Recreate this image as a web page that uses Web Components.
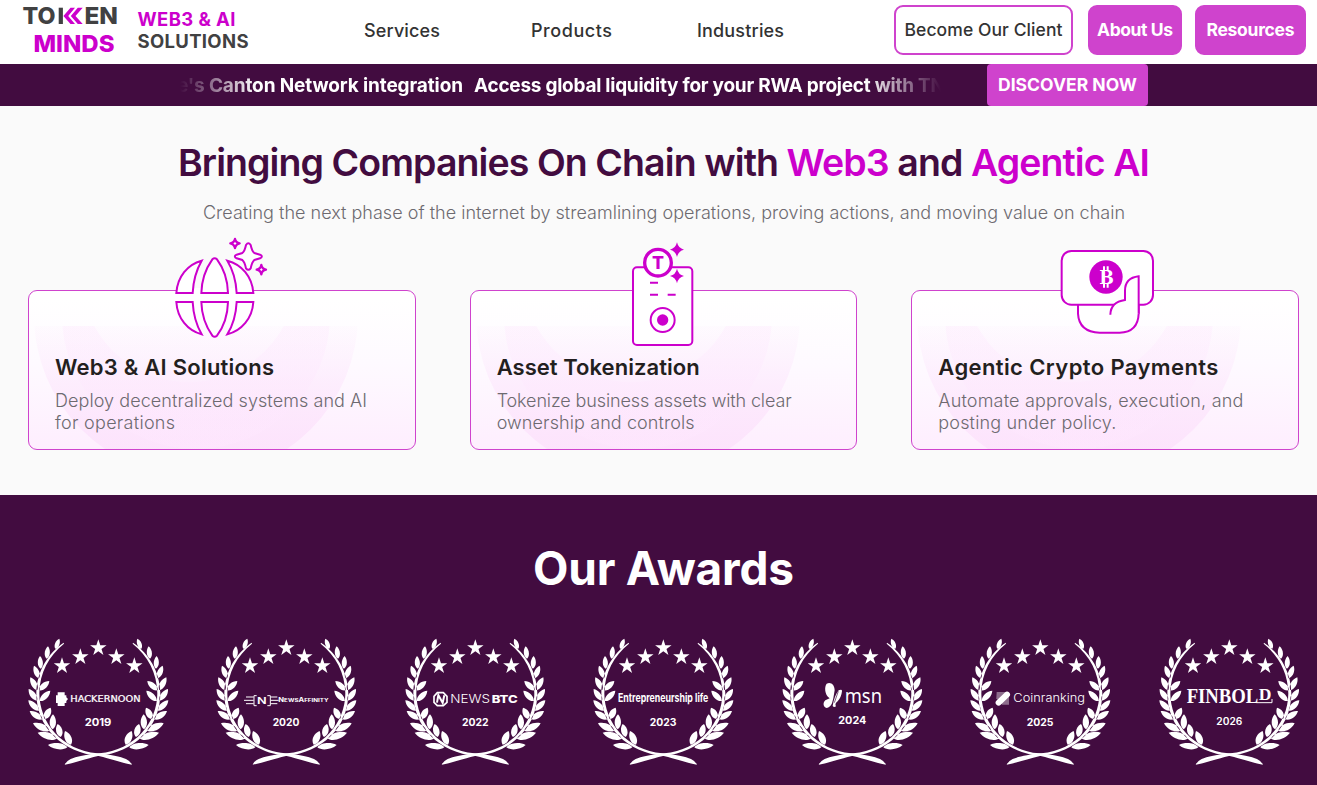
<!DOCTYPE html>
<html lang="en">
<head>
<meta charset="utf-8">
<title>TokenMinds</title>
<style>
   html, body{
      margin:0;
      padding:0;
   }
   body{
      font-family:Inter, "Liberation Sans", sans-serif;
      background:#fafafa;
      color:#231f20;
      width:1317px;
      overflow:hidden;
   }
</style>
</head>
<body>
<token-page></token-page>

<script>
'use strict'

/* Base class: clones the template of the element in its shadow root */
class BaseElement extends HTMLElement{
   constructor(){
      super();
      this.attachShadow({mode:'open'});
      const tpl = document.createElement('template');
      tpl.innerHTML = this.constructor.markup;
      this.shadowRoot.appendChild(tpl.content.cloneNode(true));
   }
}

/* One line of text, tracked so that it fills the given width */
customElements.define('fit-text', class FitText extends BaseElement{
   static markup = `
      <style>
         :host{ display:inline-block; white-space:nowrap; flex:none; }
      </style>
      <slot></slot>`;
   connectedCallback(){
      const width = parseFloat(this.getAttribute('width'));
      const count = this.textContent.length;
      const natural = this.getBoundingClientRect().width;
      if(!width || !natural || count < 2) return;
      const spacing = (width - natural) / (count - 1);
      this.style.letterSpacing = spacing + 'px';
      this.style.marginRight = -spacing + 'px';
   }
});

customElements.define('brand-logo', class BrandLogo extends BaseElement{
   static markup = `
      <style>
         :host{ display:block; }
         svg{ display:block; }
         text{ font-family:Inter, sans-serif; }
      </style>
      <svg width="260" height="64" viewBox="0 0 260 64">
         <g fill="#414142" font-weight="800" font-size="23">
            <text x="22.500" y="24" textLength="33" lengthAdjust="spacingAndGlyphs">TO</text>
            <rect x="58.700" y="7.700" width="4.200" height="16.300"/>
            <text x="84.500" y="24" textLength="33.500" lengthAdjust="spacingAndGlyphs">EN</text>
         </g>
         <g fill="#cc00cc">
            <path d="M70.500 7.700H75L68.200 15.900L75 24H70.500L63.400 15.900Z"/>
            <path d="M77.800 7.700H82.700L75.500 15.900L82.700 24H77.800L70.800 15.900Z"/>
            <text x="33.500" y="51.700" font-size="23.500" font-weight="800" textLength="81" lengthAdjust="spacingAndGlyphs">MINDS</text>
            <text x="137.500" y="26" font-size="18.500" font-weight="700" textLength="98">WEB3 &amp; AI</text>
         </g>
         <text x="137.500" y="48" fill="#414142" font-size="18.500" font-weight="700" textLength="111">SOLUTIONS</text>
      </svg>`;
});

customElements.define('nav-button', class NavButton extends BaseElement{
   static markup = `
      <style>
         :host{
            display:flex;
            align-items:center;
            justify-content:center;
            box-sizing:border-box;
            height:50px;
            padding-bottom:2px;
            border:2px solid #cf43cd;
            border-radius:9px;
            background:#cf43cd;
            color:#ffffff;
            font-size:17.500px;
            font-weight:700;
         }
         :host([outline]){
            background:#ffffff;
            color:#333333;
            font-weight:500;
         }
      </style>
      <slot></slot>`;
});

customElements.define('site-header', class SiteHeader extends BaseElement{
   static markup = `
      <style>
         :host{
            display:flex;
            align-items:center;
            height:64px;
            background:#ffffff;
            color:#333333;
         }
         nav{
            display:flex;
            gap:91px;
            margin:0 0 2px 104px;
            font-size:18px;
            font-weight:500;
            line-height:24px;
         }
         nav fit-text:nth-child(3){ margin-left:-6px; }
         .actions{
            display:flex;
            margin:0 11px 4px auto;
         }
      </style>
      <brand-logo></brand-logo>
      <nav>
         <fit-text width="76">Services</fit-text>
         <fit-text width="81">Products</fit-text>
         <fit-text width="87">Industries</fit-text>
      </nav>
      <div class="actions">
         <nav-button outline style="width:179px;margin-right:15px"><fit-text width="158">Become Our Client</fit-text></nav-button>
         <nav-button style="width:94px;margin-right:13px"><fit-text width="76">About Us</fit-text></nav-button>
         <nav-button style="width:111px"><fit-text width="88">Resources</fit-text></nav-button>
      </div>`;
});

customElements.define('news-ticker', class NewsTicker extends BaseElement{
   static markup = `
      <style>
         :host{
            display:flex;
            height:42px;
            background:#420c40;
            color:#ffffff;
            font-weight:650;
         }
         .track{
            display:flex;
            align-items:center;
            gap:11px;
            width:761px;
            margin-left:180px;
            overflow:hidden;
            font-size:19px;
            line-height:41px;
            padding-top:1px;
            box-sizing:border-box;
            -webkit-mask-image:linear-gradient(90deg, transparent, #000 10%, #000 90%, transparent);
            mask-image:linear-gradient(90deg, transparent, #000 10%, #000 90%, transparent);
         }
         .discover{
            display:flex;
            align-items:center;
            justify-content:center;
            box-sizing:border-box;
            width:161px;
            margin-left:46px;
            padding-bottom:1px;
            border-radius:4px;
            background:#cf43cd;
            font-size:17.500px;
            font-weight:700;
         }
      </style>
      <div class="track">
         <fit-text width="286" style="margin-left:-3px">e's Canton Network integration</fit-text>
         <fit-text width="471">Access global liquidity for your RWA project with TN</fit-text>
      </div>
      <div class="discover"><fit-text width="139">DISCOVER NOW</fit-text></div>`;
});

customElements.define('service-card', class ServiceCard extends BaseElement{
   static markup = `
      <style>
         :host{
            display:block;
            position:relative;
            box-sizing:border-box;
            height:160px;
            border:1px solid #cf43cd;
            border-radius:9px;
            background:linear-gradient(180deg, #ffffff 5%, #fefaff 45%, #feeefe 100%);
         }
         .rings{
            position:absolute;
            left:0;
            top:0;
            border-radius:8px;
         }
         ::slotted(svg){
            position:absolute;
            overflow:visible;
         }
         .copy{
            position:relative;
            padding:64px 26px 0;
         }
         h3{
            margin:0;
            font-size:22px;
            font-weight:600;
            line-height:24px;
            color:#231f20;
         }
         .desc{
            margin-top:11px;
            font-size:18px;
            font-weight:350;
            line-height:22px;
            color:#6d6a70;
            display:flex;
            flex-direction:column;
            align-items:flex-start;
         }
      </style>
      <svg class="rings" width="385" height="158" viewBox="0 0 385 158">
         <defs>
            <linearGradient id="a" x1="0" y1="35" x2="0" y2="158" gradientUnits="userSpaceOnUse">
               <stop offset="0" stop-color="#fbdcfb" stop-opacity=".08"/>
               <stop offset="1" stop-color="#fce0fb" stop-opacity=".75"/>
            </linearGradient>
            <linearGradient id="b" x1="0" y1="35" x2="0" y2="158" gradientUnits="userSpaceOnUse">
               <stop offset="0" stop-color="#fddffd" stop-opacity=".22"/>
               <stop offset="1" stop-color="#ffeaff" stop-opacity=".3"/>
            </linearGradient>
            <clipPath id="c"><rect y="35" width="385" height="123"/></clipPath>
         </defs>
         <g clip-path="url(#c)">
            <circle cx="167" cy="24" r="162" fill="url(#a)"/>
            <path d="M33 24a134 134 0 0 0 268 0h-41a108 108 0 0 1 -200 0z" fill="url(#b)"/>
         </g>
      </svg>
      <slot name="icon"></slot>
      <div class="copy">
         <h3><slot name="title"></slot></h3>
         <div class="desc"><slot></slot></div>
      </div>`;
});

customElements.define('hero-section', class HeroSection extends BaseElement{
   static markup = `
      <style>
         :host{
            display:block;
            box-sizing:border-box;
            height:389px;
            padding:33px 18px 0 28px;
            background:#fafafa;
         }
         h1{
            margin:0 0 0 150px;
            font-size:37.500px;
            font-weight:600;
            line-height:48px;
            color:#420c40;
         }
         h1 b{ font-weight:600; color:#cc00cc; }
         .lead{
            margin:14px 0 0 175px;
            font-size:18px;
            font-weight:350;
            line-height:24px;
            color:#6d6a70;
         }
         .cards{
            display:grid;
            grid-template-columns:repeat(3, 1fr);
            gap:54px;
            margin-top:65px;
         }
      </style>
      <h1><fit-text width="972">Bringing Companies On Chain with <b>Web3</b> and <b>Agentic AI</b></fit-text></h1>
      <div class="lead"><fit-text width="922">Creating the next phase of the internet by streamlining operations, proving actions, and moving value on chain</fit-text></div>
      <div class="cards">
         <service-card>
            <svg slot="icon" style="left:142px;top:-56px" width="100" height="105" viewBox="485 15 300 315" fill="#ffffff" stroke="#cc00cc" stroke-width="6">
               <rect x="500" y="174" width="232" height="14" stroke="none"/>
               <path d="M501 189C504 140 535 103 577 92C562 118 552 150 550 189Z"/>
               <path d="M576 189C577 150 592 112 609 88Q616 82 623 88C641 112 655 150 656 189Z"/>
               <path d="M732 189C729 140 697 103 654 92C670 118 680 150 682 189Z"/>
               <path d="M501 216C504 265 535 302 577 313C562 287 552 255 550 216Z"/>
               <path d="M576 216C577 255 592 293 609 317Q616 323 623 317C641 293 655 255 656 216Z"/>
               <path d="M732 216C729 265 697 302 654 313C670 287 680 255 682 216Z"/>
               <path d="M710 45Q717 35 724 45Q728 64 735 69L752 74Q763 79 752 85L735 90Q728 96 724 115Q717 124 710 115Q706 96 699 90L682 85Q671 79 682 74L699 69Q706 64 710 45Z"/>
               <path d="M677 27Q679 38 691 40Q679 43 677 54Q675 43 663 40Q675 38 677 27Z" stroke-width="7" stroke-linejoin="round"/>
               <path d="M756 105Q758 117 770 119Q758 121 756 133Q754 121 742 119Q754 117 756 105Z" stroke-width="7" stroke-linejoin="round"/>
            </svg>
            <fit-text slot="title" width="219">Web3 &amp; AI Solutions</fit-text>
            <fit-text width="312">Deploy decentralized systems and AI</fit-text>
            <fit-text width="120">for operations</fit-text>
         </service-card>
         <service-card>
            <svg slot="icon" style="left:159px;top:-52px" width="66.670" height="110" viewBox="90 10 200 330" fill="#ffffff" stroke="#cc00cc" stroke-width="6">
               <rect x="99" y="95" width="178" height="233" rx="12"/>
               <circle cx="174" cy="81" r="40" stroke-width="10"/>
               <text x="174" y="101" text-anchor="middle" font-family="Inter, sans-serif" font-size="51" font-weight="800" fill="#cc00cc" stroke="none" textLength="36" lengthAdjust="spacingAndGlyphs">T</text>
               <g fill="#cc00cc" stroke="none">
                  <path d="M231 20Q235 38 252 42Q235 46 231 64Q227 46 210 42Q227 38 231 20Z"/>
                  <path d="M231 99Q235 117 252 121Q235 125 231 143Q227 125 210 121Q227 117 231 99Z"/>
                  <circle cx="188" cy="253" r="17"/>
               </g>
               <path d="M150 141H174M150 177H174M203 177H227"/>
               <circle cx="188" cy="253" r="36" fill="none"/>
            </svg>
            <fit-text slot="title" width="203">Asset Tokenization</fit-text>
            <fit-text width="295">Tokenize business assets with clear</fit-text>
            <fit-text width="198">ownership and controls</fit-text>
         </service-card>
         <service-card>
            <svg slot="icon" style="left:146px;top:-44.300px" width="100" height="90" viewBox="55 35 300 270" fill="#ffffff" stroke="#cc00cc" stroke-width="6">
               <path d="M115 200V235Q118 290 180 292H240Q295 290 297 235V150Z"/>
               <rect x="66" y="47" width="274" height="161" rx="29"/>
               <circle cx="199" cy="125" r="50" fill="#cc00cc" stroke="none"/>
               <text x="201" y="146" text-anchor="middle" font-family="'DejaVu Serif', serif" font-size="58" font-weight="700" stroke="none" fill="#ffffff" textLength="44" lengthAdjust="spacingAndGlyphs">B</text>
               <path d="M193 93V106M204 93V106M193 144V157M204 144V157" stroke="#ffffff" stroke-width="6"/>
               <path d="M297 215V123Q256 128 256 166V194Q213 200 212 238L224 212H297Z" stroke="none"/>
               <path d="M297 235V123Q256 128 256 166V194Q213 200 212 238"/>
            </svg>
            <fit-text slot="title" width="280">Agentic Crypto Payments</fit-text>
            <fit-text width="305">Automate approvals, execution, and</fit-text>
            <fit-text width="178">posting under policy.</fit-text>
         </service-card>
      </div>`;
});

/* Left branch of the wreath, each leaf given as base and tip: x1 y1 x2 y2 width */
const leaves = [
   [106,56,118,26,14], [80,86,84,49,16], [62,116,60,78,16], [57,145,42,107,17],
   [52,180,31,142,18], [51,212,26,177,18], [56,242,25,211,18], [67,268,29,243,19],
   [88,302,39,280,21], [110,326,53,308,21], [142,352,84,345,19],
   [57,181,88,153,18], [60,213,91,182,18], [74,267,92,233,20], [98,298,99,253,20],
   [122,321,113,282,20], [153,344,135,303,21]
];
const leafPath = ([x1, y1, x2, y2, w]) => {
   const len = Math.hypot(x2 - x1, y2 - y1);
   const nx = -(y2 - y1) / len * w * .85;
   const ny = (x2 - x1) / len * w * .85;
   const at = (t, s) => `${(x1 + (x2 - x1) * t + nx * s).toFixed(1)} ${(y1 + (y2 - y1) * t + ny * s).toFixed(1)}`;
   return `M${x1} ${y1}C${at(.2, .75)} ${at(.7, .75)} ${x2} ${y2}C${at(.7, -.75)} ${at(.2, -.75)} ${x1} ${y1}Z`;
};
const branch = leaves.map(leafPath).join('')
   + 'M131 38L132 41C87 77 59 128 58 190C58 277 125 361 232 370C270 373 303 381 318 387Q332 394 336 404C302 398 277 388 236 378C127 368 49 292 49 190C50 124 84 70 131 38Z';
const starPath = (cx, cy) => {
   let d = '';
   for(let i = 0; i < 10; i++){
      const r = i % 2 ? 10 : 26;
      const a = Math.PI * (i / 5 - .5);
      d += (i ? 'L' : 'M') + (cx + r * Math.cos(a)).toFixed(1) + ' ' + (cy + r * Math.sin(a)).toFixed(1);
   }
   return d + 'Z';
};
const stars = [[126,108], [181,81], [235,54], [289,81], [343,108]].map(p => starPath(...p)).join('');

customElements.define('award-badge', class AwardBadge extends BaseElement{
   static markup = `
      <style>
         :host{
            display:grid;
            justify-content:center;
         }
         svg, ::slotted(svg){
            grid-area:1 / 1;
            width:156.670px;
            height:145px;
         }
      </style>
      <svg viewBox="0 0 470 435" fill="#ffffff">
         <path d="${branch}"/>
         <path d="${branch}" transform="translate(470) scale(-1 1)"/>
         <path d="${stars}"/>
      </svg>
      <slot></slot>`;
});

customElements.define('awards-section', class AwardsSection extends BaseElement{
   static markup = `
      <style>
         :host{
            display:block;
            box-sizing:border-box;
            height:290px;
            padding-top:44px;
            background:#420c40;
            color:#ffffff;
            overflow:hidden;
         }
         h2{
            margin:0;
            padding-left:533px;
            font-size:46px;
            font-weight:750;
            line-height:58px;
         }
         .row{
            display:grid;
            grid-template-columns:repeat(7, 188.500px);
            margin:33px 0 0 4px;
         }
         .row svg{ fill:#ffffff; font-family:Inter, sans-serif; }
         .year{ font-size:30px; font-weight:700; }
      </style>
      <h2><fit-text width="261">Our Awards</fit-text></h2>
      <div class="row">
         <award-badge>
            <svg viewBox="0 0 470 435">
               <path d="M113 187H134V196H139V202L144 207L139 213V219H134V228H113V219H108V196H113Z"/>
               <text x="151" y="216" font-size="25" font-family="'DejaVu Sans', sans-serif" stroke="#ffffff" stroke-width=".7" textLength="211" lengthAdjust="spacingAndGlyphs">HACKERNOON</text>
               <text class="year" x="194" y="289" textLength="80" lengthAdjust="spacingAndGlyphs">2019</text>
            </svg>
         </award-badge>
         <award-badge>
            <svg viewBox="0 0 470 435">
               <path d="M114 201H137M108 211H137M114 221H137M188 201H208M188 211H212M188 221H208M146 197H138V227H146M178 197H187V227H178" fill="none" stroke="#ffffff" stroke-width="3"/>
               <text x="147" y="221" font-size="27" font-weight="600" textLength="29" lengthAdjust="spacingAndGlyphs">N</text>
               <text x="211" y="216" font-size="14" font-weight="700" textLength="151" lengthAdjust="spacingAndGlyphs"><tspan font-size="17">N</tspan>EWS<tspan font-size="17">A</tspan>FFINITY</text>
               <text class="year" x="194" y="289" textLength="80" lengthAdjust="spacingAndGlyphs">2020</text>
            </svg>
         </award-badge>
         <award-badge>
            <svg viewBox="0 0 470 435">
               <path d="M121 188H139L150 199V217L139 227H121L111 217V199Z" fill="none" stroke="#ffffff" stroke-width="5"/>
               <path d="M120 218L124 195L137 219L142 196" fill="none" stroke="#ffffff" stroke-width="6"/>
               <text x="160" y="219" font-size="33" font-weight="300" textLength="119" lengthAdjust="spacingAndGlyphs">NEWS</text>
               <text x="284" y="219" font-size="33" font-weight="800" textLength="78" lengthAdjust="spacingAndGlyphs">BTC</text>
               <text class="year" x="195" y="289" textLength="80" lengthAdjust="spacingAndGlyphs">2022</text>
            </svg>
         </award-badge>
         <award-badge>
            <svg viewBox="0 0 470 435">
               <text x="99" y="216" font-size="35" font-weight="700" textLength="271" lengthAdjust="spacingAndGlyphs">Entrepreneurship life</text>
               <text class="year" x="194" y="289" textLength="80" lengthAdjust="spacingAndGlyphs">2023</text>
            </svg>
         </award-badge>
         <award-badge>
            <svg viewBox="0 0 470 435">
               <path d="M158 161C172 155 182 166 182 181L178 205L174 220Q168 233 158 234C147 232 146 218 154 211L167 205C151 194 151 169 158 161Z"/>
               <path d="M194 181Q205 177 204 184Q202 202 191 214Q181 222 186 229Q180 234 176 228Q180 200 194 181Z"/>
               <path d="M181 218L193 184" stroke="#420c40" stroke-width="2"/>
               <text x="212" y="220" font-size="58" font-family="'Noto Sans', sans-serif" textLength="112" lengthAdjust="spacingAndGlyphs">msn</text>
               <text class="year" x="193" y="282" textLength="84" lengthAdjust="spacingAndGlyphs">2024</text>
            </svg>
         </award-badge>
         <award-badge>
            <svg viewBox="0 0 470 435">
               <path d="M104 186H141V224H121L103 205Z" opacity=".4"/>
               <path d="M110 218L135 194" stroke="#ffffff" stroke-width="18" stroke-linecap="round"/>
               <text x="154" y="216" font-size="34" font-weight="350" textLength="215" lengthAdjust="spacingAndGlyphs">Coinranking</text>
               <text class="year" x="194" y="288" textLength="80" lengthAdjust="spacingAndGlyphs">2025</text>
            </svg>
         </award-badge>
         <award-badge>
            <svg viewBox="0 0 470 435">
               <text x="107" y="220" font-size="62" font-weight="700" font-family="'Liberation Serif', serif" textLength="215" lengthAdjust="spacingAndGlyphs">FINBOL</text>
               <text x="323" y="210" font-size="47" font-weight="700" font-family="'Liberation Serif', serif" textLength="38" lengthAdjust="spacingAndGlyphs">D</text>
               <path d="M316 218H363V207" fill="none" stroke="#ffffff" stroke-width="3"/>
               <text class="year" x="196" y="284" textLength="78" lengthAdjust="spacingAndGlyphs" style="font-weight:600">2026</text>
            </svg>
         </award-badge>
      </div>`;
});

customElements.define('token-page', class TokenPage extends BaseElement{
   static markup = `
      <style>
         :host{ display:block; width:1317px; height:785px; overflow:hidden; }
      </style>
      <site-header></site-header>
      <news-ticker></news-ticker>
      <hero-section></hero-section>
      <awards-section></awards-section>`;
});
</script>
</body>
</html>
